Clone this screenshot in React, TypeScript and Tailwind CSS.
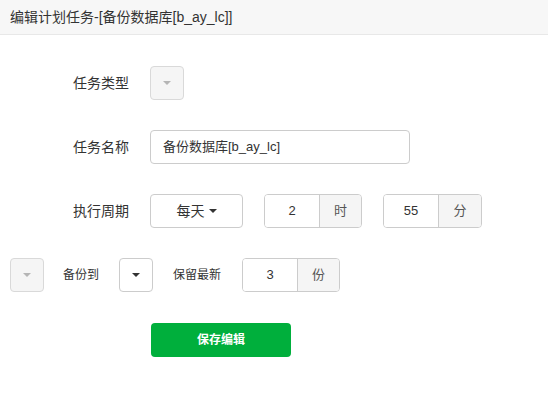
import React from 'react';

const font = { fontFamily: '"Liberation Sans", "Noto Sans CJK SC", sans-serif' };

const Caret = ({ light }: { light?: boolean }) => (
  <span
    className={`inline-block w-0 h-0 border-l-[4px] border-r-[4px] border-t-[4px] border-l-transparent border-r-transparent ${
      light ? 'border-t-[#b5b5b5]' : 'border-t-[#333]'
    }`}
  />
);

const SelectBox = ({ disabled }: { disabled?: boolean }) => (
  <div
    className={`flex items-center justify-center w-[34px] h-[34px] rounded-[4px] border ${
      disabled ? 'bg-[#f5f5f5] border-[#d9d9d9]' : 'bg-white border-[#ccc]'
    }`}
  >
    <Caret light={disabled} />
  </div>
);

const AddonInput = ({ value, unit, size }: { value: string; unit: string; size: string }) => (
  <div className={`flex h-[34px] rounded-[4px] border border-[#ccc] overflow-hidden ${size}`}>
    <div className="w-[54px] flex items-center justify-center bg-white text-[#333]">{value}</div>
    <div className="flex-1 flex items-center justify-center bg-[#f5f5f5] border-l border-[#ccc] text-[#555]">{unit}</div>
  </div>
);

const Label = ({ children }: { children: React.ReactNode }) => (
  <div className="w-[150px] pr-[21px] text-right text-[14px] text-[#333]">{children}</div>
);

export default function App() {
  return (
    <div className="w-[548px] h-[417px] bg-white text-[13px] text-[#333]" style={font}>
      {/* header */}
      <div className="h-[35px] flex items-center px-[10px] bg-[#f7f7f7] border-b border-[#e8e8e8] text-[14px] text-[#333]">
        编辑计划任务-[备份数据库[b_ay_lc]]
      </div>

      <div className="pt-[31px] flex flex-col gap-[30px]">
        <div className="flex items-center">
          <Label>任务类型</Label>
          <SelectBox disabled />
        </div>

        <div className="flex items-center">
          <Label>任务名称</Label>
          <div className="w-[260px] h-[34px] flex items-center px-[12px] rounded-[4px] border border-[#ccc] bg-white">
            备份数据库[b_ay_lc]
          </div>
        </div>

        <div className="flex items-center">
          <Label>执行周期</Label>
          <div className="w-[93px] h-[34px] flex items-center justify-center gap-[4px] rounded-[4px] border border-[#ccc] bg-white text-[14px]">
            每天
            <Caret />
          </div>
          <div className="ml-[21px]">
            <AddonInput value="2" unit="时" size="w-[98px]" />
          </div>
          <div className="ml-[21px]">
            <AddonInput value="55" unit="分" size="w-[99px]" />
          </div>
        </div>

        <div className="flex items-center pl-[10px] text-[12px]">
          <SelectBox disabled />
          <span className="ml-[19px]">备份到</span>
          <div className="ml-[20px]">
            <SelectBox />
          </div>
          <span className="ml-[20px]">保留最新</span>
          <div className="ml-[21px] text-[13px]">
            <AddonInput value="3" unit="份" size="w-[98px]" />
          </div>
        </div>
      </div>

      <div className="pt-[31px] pl-[151px]">
        <button className="w-[140px] h-[34px] rounded-[4px] bg-[#00af3c] text-white text-[12px] font-bold">
          保存编辑
        </button>
      </div>
    </div>
  );
}
